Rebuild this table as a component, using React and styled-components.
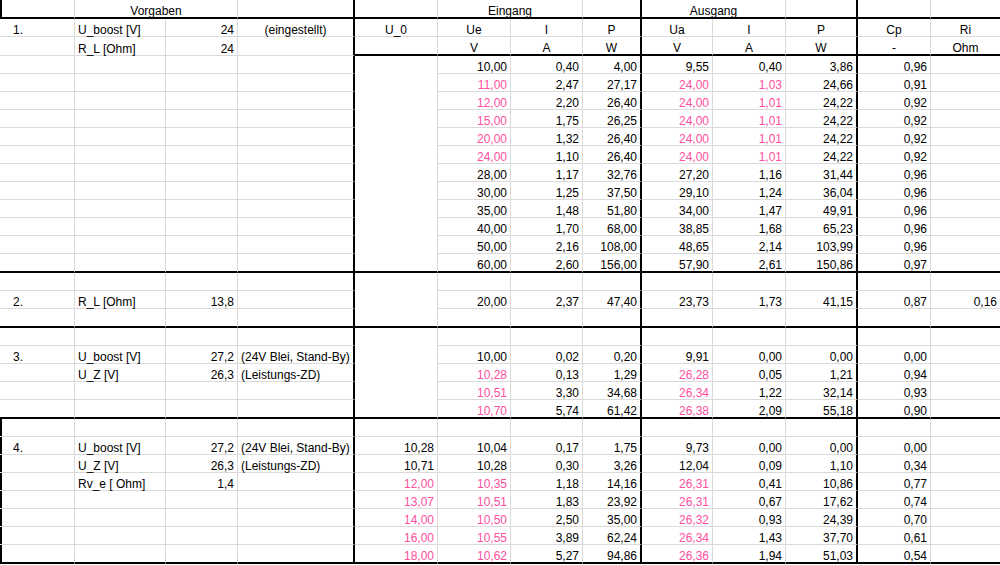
import React from 'react';
import styled, { createGlobalStyle } from 'styled-components';

const GlobalStyle = createGlobalStyle`
  html, body { margin: 0; padding: 0; background: #fff; }
  body { font-family: "Liberation Sans", Arial, sans-serif; }
`;

const COLS = [75, 91, 72, 117, 83, 73, 72, 59, 71, 73, 72, 73, 69];
const HEAVY_RIGHT = [3, 7, 10];
const GRID = '#dadada';
const PINK = '#ff4f9e';

const Sheet = styled.div`
  width: 1000px;
  display: flex;
  flex-direction: column;
  font-size: 12px;
  color: #000;
`;

const Row = styled.div`
  display: grid;
  grid-template-columns: ${COLS.map((w) => `${w}px`).join(' ')};
  height: ${(p) => (p.$thick ? 19 : 18)}px;
  box-shadow: ${(p) => (p.$edge ? 'inset 2px 0 0 #000' : 'none')};
`;

const Cell = styled.div`
  box-sizing: border-box;
  grid-column: span ${(p) => p.$span || 1};
  display: flex;
  align-items: flex-end;
  justify-content: ${(p) =>
    p.$align === 'r' ? 'flex-end' : p.$align === 'c' ? 'center' : 'flex-start'};
  padding: ${(p) =>
    p.$align === 'r' ? '0 3px 0 0' : p.$align === 'c' ? '0' : `0 0 0 ${p.$indent ? 13 : 3}px`};
  border-right: ${(p) =>
    p.$right === 'heavy' ? '2px solid #000' : p.$right === 'none' ? '0' : `1px solid ${GRID}`};
  border-bottom: ${(p) =>
    p.$bottom === 'thick' ? '2px solid #000' : p.$bottom === 'none' ? '0' : `1px solid ${GRID}`};
  color: ${(p) => (p.$pink ? PINK : 'inherit')};
  white-space: nowrap;
  line-height: 12px;
`;

const rightOf = (i) => (HEAVY_RIGHT.includes(i) ? 'heavy' : i === COLS.length - 1 ? 'none' : 'thin');

const bodyAlign = (i) => (i === 0 ? 'l' : i === 1 ? 'l' : i === 2 ? 'r' : i === 3 ? 'l' : 'r');
const headAlign = (i) => (i === 0 ? 'l' : i === 1 ? 'l' : i === 2 ? 'r' : 'c');

const B = (cells, extra = {}) => ({ cells, ...extra });

const block1 = [
  ['10,00', '0,40', '4,00', '9,55', '0,40', '3,86', '0,96'],
  ['*11,00', '2,47', '27,17', '*24,00', '*1,03', '24,66', '0,91'],
  ['*12,00', '2,20', '26,40', '*24,00', '*1,01', '24,22', '0,92'],
  ['*15,00', '1,75', '26,25', '*24,00', '*1,01', '24,22', '0,92'],
  ['*20,00', '1,32', '26,40', '*24,00', '*1,01', '24,22', '0,92'],
  ['*24,00', '1,10', '26,40', '*24,00', '*1,01', '24,22', '0,92'],
  ['28,00', '1,17', '32,76', '27,20', '1,16', '31,44', '0,96'],
  ['30,00', '1,25', '37,50', '29,10', '1,24', '36,04', '0,96'],
  ['35,00', '1,48', '51,80', '34,00', '1,47', '49,91', '0,96'],
  ['40,00', '1,70', '68,00', '38,85', '1,68', '65,23', '0,96'],
  ['50,00', '2,16', '108,00', '48,65', '2,14', '103,99', '0,96'],
  ['60,00', '2,60', '156,00', '57,90', '2,61', '150,86', '0,97'],
].map((v, i, a) =>
  B(['', '', '', '', '', ...v, ''], { eBlank: true, thick: i === a.length - 1 })
);

const block2 = [
  B(['', '', '', '', '', '', '', '', '', '', '', '', ''], { eBlank: true }),
  B(['2.', 'R_L [Ohm]', '13,8', '', '', '20,00', '2,37', '47,40', '23,73', '1,73', '41,15', '0,87', '0,16'], { eBlank: true }),
  B(['', '', '', '', '', '', '', '', '', '', '', '', ''], { eBlank: true, thick: true }),
];

const block3 = [
  B(['', '', '', '', '', '', '', '', '', '', '', '', ''], { eBlank: true }),
  B(['3.', 'U_boost [V]', '27,2', '(24V Blei, Stand-By)', '', '10,00', '0,02', '0,20', '9,91', '0,00', '0,00', '0,00', ''], { eBlank: true }),
  B(['', 'U_Z [V]', '26,3', '(Leistungs-ZD)', '', '*10,28', '0,13', '1,29', '*26,28', '0,05', '1,21', '0,94', ''], { eBlank: true }),
  B(['', '', '', '', '', '*10,51', '3,30', '34,68', '*26,34', '1,22', '32,14', '0,93', ''], { eBlank: true }),
  B(['', '', '', '', '', '*10,70', '5,74', '61,42', '*26,38', '2,09', '55,18', '0,90', ''], { eBlank: true, thick: true }),
];

const block4 = [
  B(['', '', '', '', '', '', '', '', '', '', '', '', '']),
  B(['4.', 'U_boost [V]', '27,2', '(24V Blei, Stand-By)', '10,28', '10,04', '0,17', '1,75', '9,73', '0,00', '0,00', '0,00', '']),
  B(['', 'U_Z [V]', '26,3', '(Leistungs-ZD)', '10,71', '10,28', '0,30', '3,26', '12,04', '0,09', '1,10', '0,34', '']),
  B(['', 'Rv_e [ Ohm]', '1,4', '', '*12,00', '*10,35', '1,18', '14,16', '*26,31', '0,41', '10,86', '0,77', '']),
  B(['', '', '', '', '*13,07', '*10,51', '1,83', '23,92', '*26,31', '0,67', '17,62', '0,74', '']),
  B(['', '', '', '', '*14,00', '*10,50', '2,50', '35,00', '*26,32', '0,93', '24,39', '0,70', '']),
  B(['', '', '', '', '*16,00', '*10,55', '3,89', '62,24', '*26,34', '1,43', '37,70', '0,61', '']),
  B(['', '', '', '', '*18,00', '*10,62', '5,27', '94,86', '*26,36', '1,94', '51,03', '0,54', ''], { thick: true }),
].map((r) => ({ ...r, edge: true }));

function BodyRow({ row }) {
  return (
    <Row $thick={row.thick} $edge={row.edge}>
      {row.cells.map((raw, i) => {
        const pink = raw.startsWith('*');
        const text = pink ? raw.slice(1) : raw;
        const bottom = row.thick ? 'thick' : row.eBlank && i === 4 ? 'none' : 'thin';
        return (
          <Cell
            key={i}
            $align={bodyAlign(i)}
            $indent={i === 0}
            $pink={pink}
            $right={rightOf(i)}
            $bottom={bottom}
          >
            {text}
          </Cell>
        );
      })}
    </Row>
  );
}

function HeadRow({ cells, thickFrom, centerD }) {
  return (
    <Row $thick={thickFrom !== undefined}>
      {cells.map((text, i) => (
        <Cell
          key={i}
          $align={i === 3 && centerD ? 'c' : headAlign(i)}
          $indent={i === 0}
          $right={rightOf(i)}
          $bottom={thickFrom !== undefined && i >= thickFrom ? 'thick' : 'thin'}
        >
          {text}
        </Cell>
      ))}
    </Row>
  );
}

function TitleRow() {
  const groups = [
    { span: 1, text: '', end: 0 },
    { span: 2, text: 'Vorgaben', end: 2 },
    { span: 1, text: '', end: 3 },
    { span: 1, text: '', end: 4 },
    { span: 2, text: 'Eingang', end: 6 },
    { span: 1, text: '', end: 7 },
    { span: 2, text: 'Ausgang', end: 9 },
    { span: 1, text: '', end: 10 },
    { span: 1, text: '', end: 11 },
    { span: 1, text: '', end: 12 },
  ];
  return (
    <Row $thick $edge>
      {groups.map((g, i) => (
        <Cell key={i} $span={g.span} $align="c" $right={rightOf(g.end)} $bottom="thick">
          {g.text}
        </Cell>
      ))}
    </Row>
  );
}

export default function App() {
  return (
    <>
      <GlobalStyle />
      <Sheet>
        <TitleRow />
        <HeadRow
          centerD
          cells={['1.', 'U_boost [V]', '24', '(eingestellt)', 'U_0', 'Ue', 'I', 'P', 'Ua', 'I', 'P', 'Cp', 'Ri']}
        />
        <HeadRow
          thickFrom={4}
          cells={['', 'R_L [Ohm]', '24', '', '', 'V', 'A', 'W', 'V', 'A', 'W', '-', 'Ohm']}
        />
        {[...block1, ...block2, ...block3, ...block4].map((row, i) => (
          <BodyRow key={i} row={row} />
        ))}
      </Sheet>
    </>
  );
}
